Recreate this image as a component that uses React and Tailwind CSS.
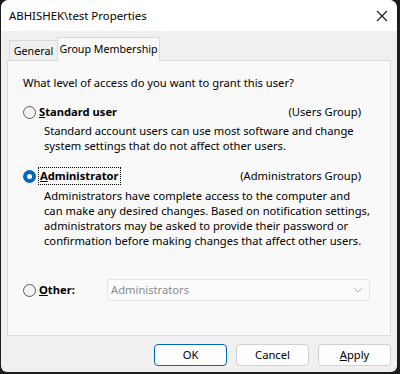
import React from "react";

const font = { fontFamily: '"Segoe UI", "Noto Sans", "Liberation Sans", sans-serif' };

function Radio({ checked }) {
  if (checked) {
    return (
      <span className="w-[13px] h-[13px] rounded-full bg-[#0067c0] flex items-center justify-center shrink-0">
        <span className="w-[5px] h-[5px] rounded-full bg-white" />
      </span>
    );
  }
  return <span className="w-[13px] h-[13px] rounded-full border border-[#5c5c5c] bg-[#f3f3f3] shrink-0" />;
}

export default function App() {
  return (
    <div className="w-[400px] h-[374px] bg-[#1c1c1c] pl-[1px] pr-[3px] pb-[2px] text-[11.2px] text-black whitespace-nowrap" style={font}>
      <div className="w-full h-full bg-[#f0f0f0] rounded-t-[8px] rounded-b-[6px] overflow-hidden flex flex-col">
        {/* title bar */}
        <div className="h-[31px] bg-white flex items-center justify-between pl-[8px] pr-[6px] shrink-0">
          <span className="text-[11.4px]">ABHISHEK\test Properties</span>
          <svg width="12" height="12" viewBox="0 0 12 12" className="mr-[3px]">
            <path d="M1 1 L11 11 M11 1 L1 11" stroke="#1a1a1a" strokeWidth="1.1" fill="none" />
          </svg>
        </div>
        {/* tabs */}
        <div className="flex items-end pl-[8px] pt-[7px] h-[29px] shrink-0 relative z-10 text-[10.7px]">
          <div className="h-[21px] w-[48px] justify-center border border-[#d9d9d9] border-r-0 bg-[#f0f0f0] flex items-center pt-[2px] mb-[-1px]">General</div>
          <div className="h-[24px] w-[103px] justify-center border border-[#d9d9d9] border-b-0 bg-[#f9f9f9] flex items-center mb-[-1px]">Group Membership</div>
        </div>
        {/* panel */}
        <div className="mx-[6px] h-[276px] shrink-0 border border-[#dcdcdc] bg-[#f9f9f9] pl-[15px] pr-[29px] pt-[13px] flex flex-col">
          <div className="h-[18px] flex items-center">What level of access do you want to grant this user?</div>

          <div className="mt-[11px] h-[18px] flex items-center">
            <Radio />
            <span className="ml-[3px] font-bold"><u>S</u>tandard user</span>
            <span className="ml-auto">(Users Group)</span>
          </div>
          <div className="pl-[21px] mt-[2px] leading-[15px]">
            <div>Standard account users can use most software and change</div>
            <div>system settings that do not affect other users.</div>
          </div>

          <div className="mt-[14px] h-[18px] flex items-center">
            <Radio checked />
            <span className="ml-[2px] font-bold border border-dotted border-black px-[1px] leading-[16px]"><u>A</u>dministrator</span>
            <span className="ml-auto">(Administrators Group)</span>
          </div>
          <div className="pl-[21px] mt-[3px] leading-[15px]">
            <div>Administrators have complete access to the computer and</div>
            <div>can make any desired changes. Based on notification settings,</div>
            <div>administrators may be asked to provide their password or</div>
            <div>confirmation before making changes that affect other users.</div>
          </div>

          <div className="mt-[31px] h-[22px] flex items-center">
            <Radio />
            <span className="ml-[3px] font-bold w-[68px]"><u>O</u>ther:</span>
            <div className="flex-1 h-[22px] mr-[-9px] border border-[#e5e5e5] bg-[#fbfbfb] rounded-[3px] flex items-center pl-[3px] pr-[6px] text-[#8a8a8a]">
              <span>Administrators</span>
              <svg width="10" height="6" viewBox="0 0 10 6" className="ml-auto">
                <path d="M1 1 L5 5 L9 1" stroke="#b5b5b5" strokeWidth="1" fill="none" />
              </svg>
            </div>
          </div>
        </div>
        {/* buttons */}
        <div className="flex justify-end gap-[9px] pr-[6px] pt-[8px]">
          <button className="w-[73px] h-[22px] rounded-[4px] border border-[#0067c0] bg-[#fdfdfd]">OK</button>
          <button className="w-[73px] h-[22px] rounded-[4px] border border-[#d0d0d0] bg-[#fdfdfd]">Cancel</button>
          <button className="w-[73px] h-[22px] rounded-[4px] border border-[#d0d0d0] bg-[#fdfdfd]"><u>A</u>pply</button>
        </div>
      </div>
    </div>
  );
}
